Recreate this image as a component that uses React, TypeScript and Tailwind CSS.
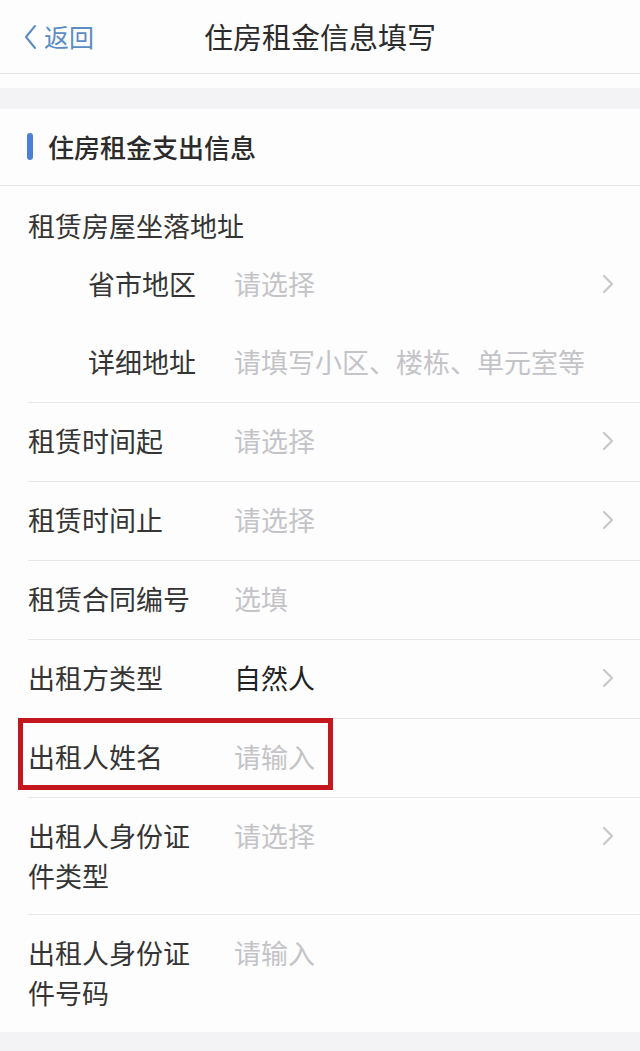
import { ReactNode } from "react";

const font = { fontFamily: '"Noto Sans CJK SC", "Noto Sans", sans-serif' };

function Chevron() {
  return (
    <svg width="12" height="20" viewBox="0 0 12 20" className="shrink-0">
      <path d="M2 2 L10 10 L2 18" fill="none" stroke="#c8c8cc" strokeWidth="2.2" strokeLinecap="round" strokeLinejoin="round" />
    </svg>
  );
}

type RowProps = {
  label: ReactNode;
  value: string;
  filled?: boolean;
  arrow?: boolean;
  tall?: boolean;
  last?: boolean;
  children?: ReactNode;
};

function Row({ label, value, filled, arrow, tall, last, children }: RowProps) {
  return (
    <div className="relative pl-[28px]">
      <div
        className={`flex pr-[26px] ${tall ? "h-[117px] items-start pt-[18px]" : "h-[79px] items-center pb-[2px]"} ${last ? "" : "border-b border-[#e8e8ea]"}`}
      >
        <div className="w-[206px] shrink-0 text-[27px] leading-[40px] text-[#353535]">{label}</div>
        <div className={`flex-1 text-[27px] leading-[40px] ${filled ? "text-[#222]" : "text-[#c4c4c8]"}`}>{value}</div>
        {arrow && (
          <div className="flex h-[40px] items-center">
            <Chevron />
          </div>
        )}
      </div>
      {children}
    </div>
  );
}

export default function App() {
  return (
    <div className="min-h-[1051px] w-[640px] bg-[#f3f3f5]" style={font}>
      <div className="relative flex h-[74px] items-center justify-center border-b border-[#e4e4e6] bg-[#fdfdfd]">
        <div className="absolute left-[24px] top-0 flex h-full items-center gap-[7px] text-[#5b8cc4]">
          <svg width="13" height="26" viewBox="0 0 13 26">
            <path d="M11 2 L2 13 L11 24" fill="none" stroke="#5b8cc4" strokeWidth="2" strokeLinecap="round" strokeLinejoin="round" />
          </svg>
          <span className="text-[25px] leading-none">返回</span>
        </div>
        <h1 className="text-[29px] leading-none font-normal text-[#2b2b2b]">住房租金信息填写</h1>
      </div>
      <div className="h-[14px] bg-[#fdfdfd]" />
      <div className="h-[21px]" />

      <div className="bg-[#fdfdfd]">
        <div className="flex h-[77px] items-center gap-[15px] border-b border-[#e8e8ea] pb-[2px] pl-[27px]">
          <div className="h-[27px] w-[6px] rounded-full bg-[#4a80d6]" />
          <span className="text-[26px] font-medium text-[#2b2b2b]">住房租金支出信息</span>
        </div>

        <div className="pl-[28px]">
          <div className="border-b border-[#e8e8ea]">
            <div className="pt-[20px] text-[27px] leading-[40px] text-[#353535]">租赁房屋坐落地址</div>
            <div className="flex h-[78px] items-center pr-[26px] pb-[2px] pl-[60px]">
              <div className="w-[146px] text-[27px] leading-[40px] text-[#353535]">省市地区</div>
              <div className="flex-1 text-[27px] leading-[40px] text-[#c4c4c8]">请选择</div>
              <Chevron />
            </div>
            <div className="flex h-[78px] items-center pb-[2px] pl-[60px]">
              <div className="w-[146px] text-[27px] leading-[40px] text-[#353535]">详细地址</div>
              <div className="flex-1 text-[27px] leading-[40px] whitespace-nowrap text-[#c4c4c8]">请填写小区、楼栋、单元室等</div>
            </div>
          </div>
        </div>

        <Row label="租赁时间起" value="请选择" arrow />
        <Row label="租赁时间止" value="请选择" arrow />
        <Row label="租赁合同编号" value="选填" />
        <Row label="出租方类型" value="自然人" filled arrow />
        <Row label="出租人姓名" value="请输入">
          <div className="pointer-events-none absolute top-[-1px] left-[18px] h-[72px] w-[315px] border-[5px] border-[#c3171d]" />
        </Row>
        <Row
          label={
            <>
              出租人身份证
              <br />
              件类型
            </>
          }
          value="请选择"
          arrow
          tall
        />
        <Row
          label={
            <>
              出租人身份证
              <br />
              件号码
            </>
          }
          value="请输入"
          tall
          last
        />
      </div>
    </div>
  );
}
